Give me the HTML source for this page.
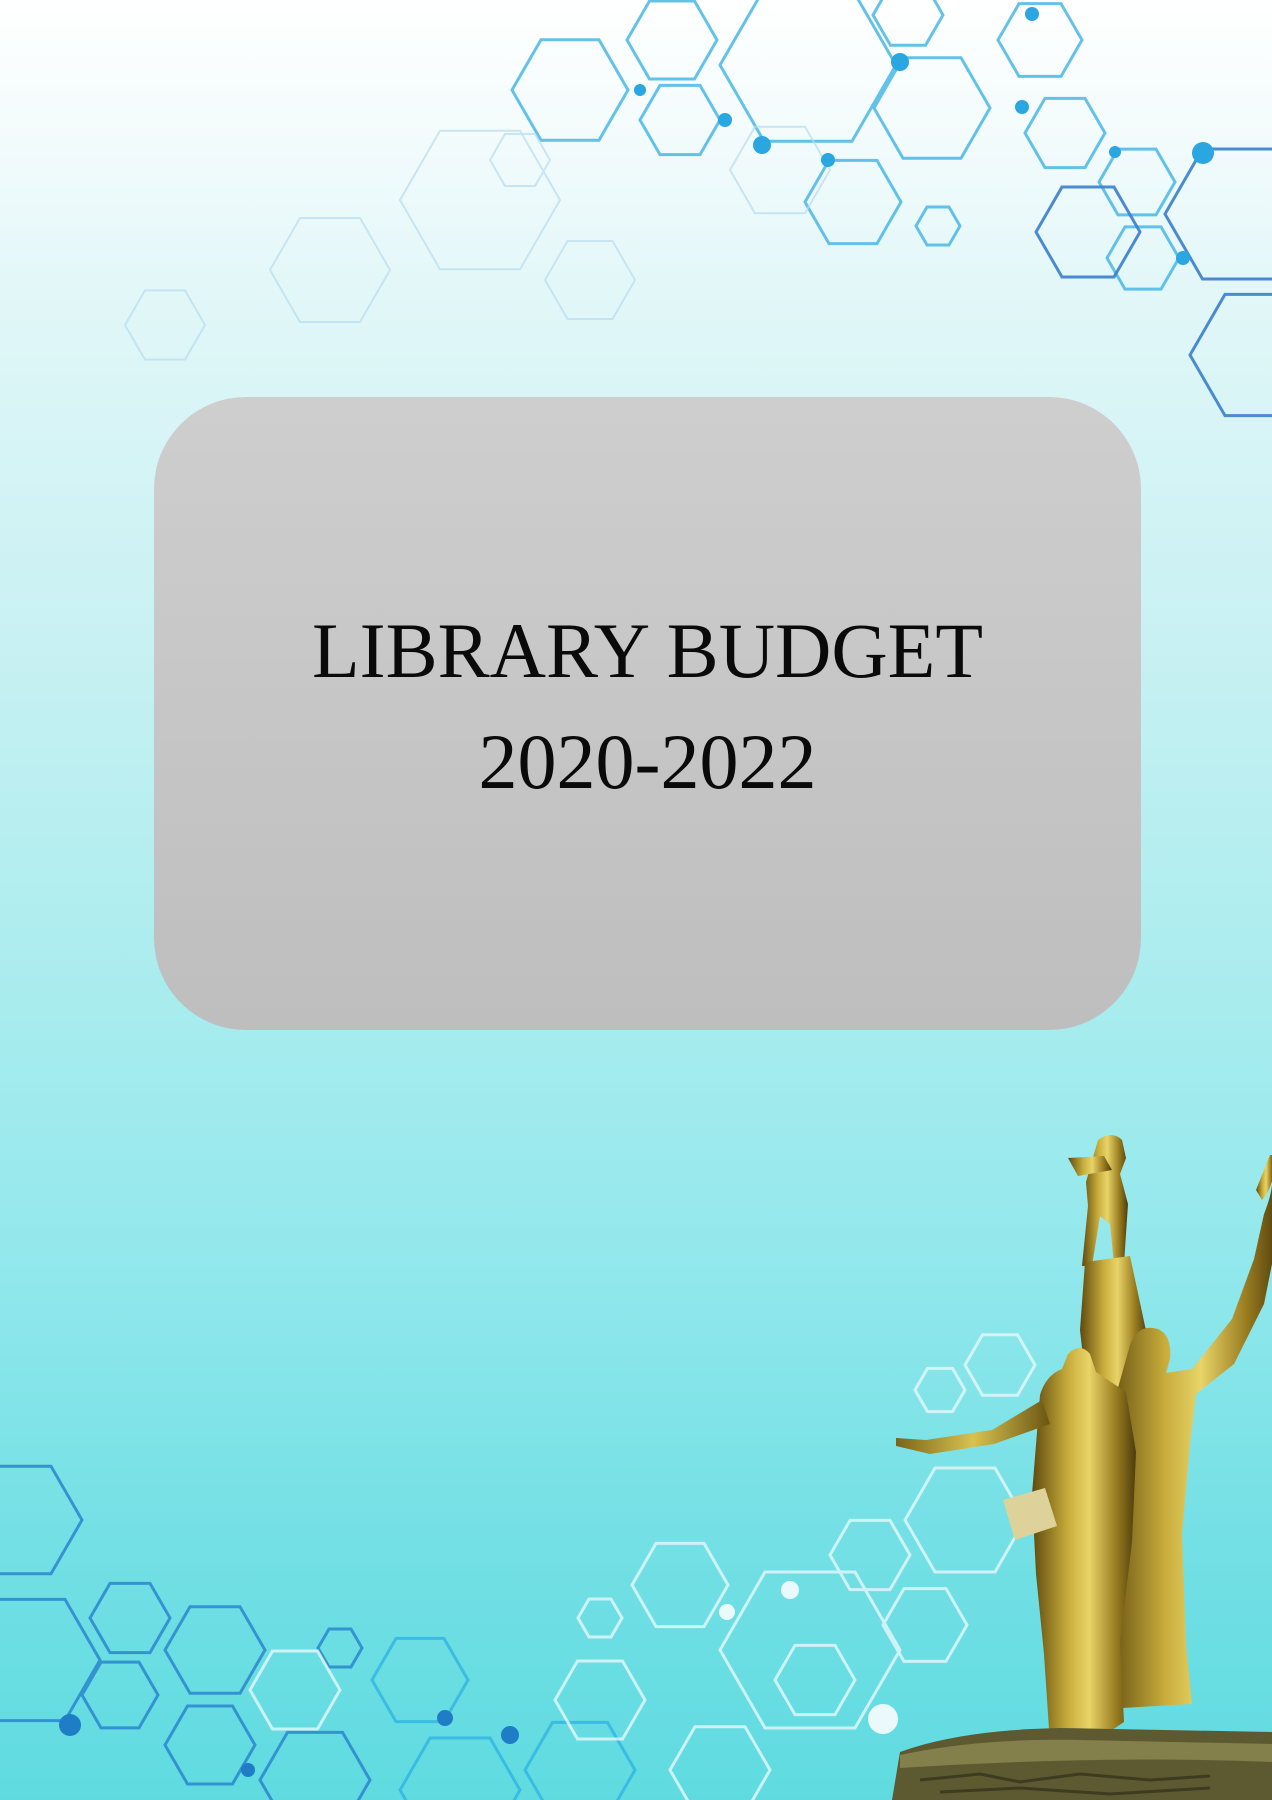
<!DOCTYPE html>
<html><head><meta charset="utf-8"><style>
html,body{margin:0;padding:0}
body{width:1272px;height:1800px;position:relative;overflow:hidden;
background:linear-gradient(180deg,#ffffff 0%,#f2fbfc 8%,#dff6f7 18%,#c9f1f3 35%,#aeedef 52%,#92e8ec 70%,#74e0e5 85%,#5fdbe0 100%);
font-family:"Liberation Serif",serif}
.box{position:absolute;left:154px;top:397px;width:987px;height:633px;border-radius:92px;
background:linear-gradient(180deg,#cecece,#bebebe)}
.t{position:absolute;left:154px;width:987px;text-align:center;font-size:78px;color:#0a0a0a;line-height:1}
svg{position:absolute;left:0;top:0}
</style></head><body>
<svg width="1272" height="1800" viewBox="0 0 1272 1800">
<defs><polygon id="h" points="1,0 .5,.866 -.5,.866 -1,0 -.5,-.866 .5,-.866" fill="none" vector-effect="non-scaling-stroke"/>
<linearGradient id="g" x1="0" x2="1"><stop offset="0" stop-color="#5e4a0e"/><stop offset=".35" stop-color="#c9ad3c"/><stop offset=".55" stop-color="#e8d468"/><stop offset=".8" stop-color="#9c7f22"/><stop offset="1" stop-color="#4e3c0c"/></linearGradient>
<linearGradient id="g2" x1="0" x2="1"><stop offset="0" stop-color="#7a6418"/><stop offset=".5" stop-color="#d8c250"/><stop offset="1" stop-color="#6a5512"/></linearGradient>
</defs>
<g stroke="#4ab8e6" stroke-width="3" opacity=".85">
<use href="#h" transform="translate(808,65) scale(88)"/>
<use href="#h" transform="translate(570,90) scale(58)"/>
<use href="#h" transform="translate(672,40) scale(45)"/>
<use href="#h" transform="translate(680,120) scale(40)"/>
<use href="#h" transform="translate(853,202) scale(48)"/>
<use href="#h" transform="translate(932,108) scale(58)"/>
<use href="#h" transform="translate(1040,40) scale(42)"/>
<use href="#h" transform="translate(1065,133) scale(40)"/>
<use href="#h" transform="translate(1137,182) scale(38)"/>
<use href="#h" transform="translate(1143,258) scale(36)"/>
<use href="#h" transform="translate(938,226) scale(22)"/>
<use href="#h" transform="translate(908,15) scale(35)"/>
</g>
<g stroke="#3a7fcc" stroke-width="3" opacity=".9">
<use href="#h" transform="translate(1240,214) scale(75)"/>
<use href="#h" transform="translate(1260,355) scale(70)"/>
<use href="#h" transform="translate(1088,232) scale(52)"/>
</g>
<g stroke="#b9dcef" stroke-width="2" opacity=".7">
<use href="#h" transform="translate(480,200) scale(80)"/>
<use href="#h" transform="translate(590,280) scale(45)"/>
<use href="#h" transform="translate(330,270) scale(60)"/>
<use href="#h" transform="translate(165,325) scale(40)"/>
<use href="#h" transform="translate(520,160) scale(30)"/>
<use href="#h" transform="translate(780,170) scale(50)"/>
</g>
<g fill="#2aa6e0">
<circle cx="900" cy="62" r="9"/><circle cx="762" cy="145" r="9"/><circle cx="1203" cy="153" r="11"/><circle cx="1022" cy="107" r="7"/><circle cx="1183" cy="258" r="7"/><circle cx="1115" cy="152" r="6"/><circle cx="725" cy="120" r="7"/><circle cx="640" cy="90" r="6"/><circle cx="828" cy="160" r="7"/><circle cx="1032" cy="14" r="7"/>
</g>
<g stroke="#2b86cf" stroke-width="3" opacity=".85">
<use href="#h" transform="translate(20,1520) scale(62)"/>
<use href="#h" transform="translate(30,1660) scale(70)"/>
<use href="#h" transform="translate(130,1618) scale(40)"/>
<use href="#h" transform="translate(120,1695) scale(38)"/>
<use href="#h" transform="translate(215,1650) scale(50)"/>
<use href="#h" transform="translate(210,1745) scale(45)"/>
<use href="#h" transform="translate(315,1780) scale(55)"/>
<use href="#h" transform="translate(340,1648) scale(22)"/>
</g>
<g stroke="#31b4e4" stroke-width="3" opacity=".8">
<use href="#h" transform="translate(420,1680) scale(48)"/>
<use href="#h" transform="translate(460,1790) scale(60)"/>
<use href="#h" transform="translate(580,1770) scale(55)"/>
</g>
<g stroke="#e6f8fa" stroke-width="3" opacity=".8">
<use href="#h" transform="translate(680,1585) scale(48)"/>
<use href="#h" transform="translate(810,1650) scale(90)"/>
<use href="#h" transform="translate(815,1680) scale(40)"/>
<use href="#h" transform="translate(870,1555) scale(40)"/>
<use href="#h" transform="translate(925,1625) scale(42)"/>
<use href="#h" transform="translate(965,1520) scale(60)"/>
<use href="#h" transform="translate(940,1390) scale(25)"/>
<use href="#h" transform="translate(1000,1365) scale(35)"/>
<use href="#h" transform="translate(600,1700) scale(45)"/>
<use href="#h" transform="translate(720,1770) scale(50)"/>
<use href="#h" transform="translate(600,1618) scale(22)"/>
<use href="#h" transform="translate(295,1690) scale(45)"/>
</g>
<g fill="#1f7cc6"><circle cx="70" cy="1725" r="11"/><circle cx="510" cy="1735" r="9"/><circle cx="445" cy="1718" r="8"/><circle cx="248" cy="1770" r="7"/></g>
<g fill="#eafafb"><circle cx="883" cy="1719" r="15"/><circle cx="790" cy="1590" r="9"/><circle cx="727" cy="1612" r="8"/></g>
<!-- statue -->
<g fill="url(#g)">
<!-- cherub top -->
<path d="M1098,1140 q14,-10 24,0 l4,18 -6,16 8,30 -4,60 -10,0 -4,-40 -10,-8 -8,50 -10,0 6,-60 -2,-24 z"/>
<path d="M1068,1158 l36,-2 8,14 -34,6 z"/>
<!-- pillar -->
<path d="M1085,1262 L1130,1256 L1148,1340 L1140,1420 L1090,1420 L1080,1330 Z"/>
<!-- male figure -->
<path d="M1130,1345 q8,-22 28,-16 q14,6 12,30 l-4,14 26,-4 40,-50 22,-60 10,-45 q10,-25 8,-40 l8,0 -2,60 -14,70 -30,60 -38,30 -6,50 -8,90 4,110 6,60 -70,4 -4,-90 -6,-100 -8,-80 z"/>
<!-- female figure -->
<path d="M1040,1395 q6,-20 22,-26 l6,-15 q12,-12 22,0 l6,18 30,20 10,60 -4,90 -12,100 4,80 -24,16 -50,6 -6,-90 -8,-80 -4,-80 z"/>
<path d="M1042,1400 l-50,30 -66,10 -30,-2 0,8 34,8 64,-10 56,-20 z" fill="url(#g2)"/>
<path d="M1003,1500 l42,-12 12,38 -42,14 z" fill="#ddd39a"/>
<path d="M1262,1200 q14,-15 12,-45 l-4,0 -14,35 z"/>
</g>
<!-- base -->
<path d="M892,1800 L900,1752 Q960,1730 1060,1728 L1272,1732 L1272,1800 Z" fill="#5d5a32"/>
<path d="M900,1755 Q980,1738 1080,1740 L1272,1744 L1272,1762 Q1100,1755 900,1768 Z" fill="#8e8a52" opacity=".8"/>
<path d="M920,1780 l60,-6 40,8 60,-8 70,6 60,-4 M940,1792 l80,-4 90,6 100,-6" stroke="#3e3c20" stroke-width="3" fill="none"/>
</svg>
<div class="box"></div>
<div class="t" style="top:612px">LIBRARY BUDGET</div>
<div class="t" style="top:723px">2020-2022</div>
</body></html>
